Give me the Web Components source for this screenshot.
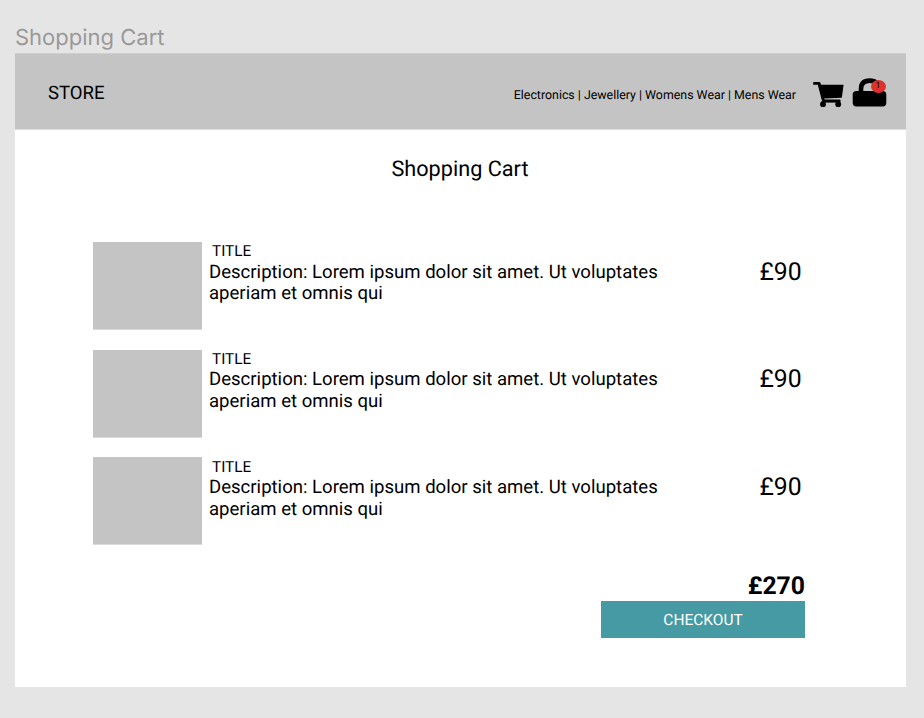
<!DOCTYPE html>
<html lang="en"><head><meta charset="utf-8"><title>Shopping Cart</title>
<style>
html,body{margin:0;height:100%;background:#e5e5e5;overflow:hidden}
body{font-family:Roboto,"Liberation Sans",sans-serif;color:#000;text-rendering:geometricPrecision}
</style></head><body>
<cart-page></cart-page>
<script>
const define=(name,html)=>customElements.define(name,class extends HTMLElement{
  constructor(){super();this.attachShadow({mode:"open"}).innerHTML=html;}
});
define("cart-icon",`<style>:host{display:block;width:32px;height:27px}svg{display:block}</style>
<svg width="32" height="27" viewBox="0.4 0 32 27">
<path d="M1.2 1H6.6Q7.6 1 7.9 2L8.4 3.8H30.5Q31 3.8 30.9 4.4L29.3 16.2Q29.2 16.8 28.6 16.8L11.5 17.4Q11.6 18.4 12.6 18.4H26.8Q28 18.4 28 19.6V20.8H11.8Q9.6 20.8 9 18.6L5.2 3.8H1.2Q.6 3.8.6 3.2V1.6Q.6 1 1.2 1Z"/>
<path d="M9 20H27.5V21.6H9Z"/><circle cx="10.4" cy="23.2" r="2.9"/><circle cx="25.6" cy="23.2" r="2.9"/>
</svg>`);
define("bag-icon",`<style>:host{display:block;position:relative;width:35px;height:31px}svg{display:block}
span{position:absolute;left:18.5px;top:3px;width:15px;height:13px;border-radius:50%;background:#e0302b;color:#000;font-size:8.7px;line-height:13px;text-align:center}</style>
<svg width="35" height="31" viewBox="0 0 35 31"><path d="M9 16V12Q9 3.6 17.7 3.6Q26.4 3.6 26.4 12V16" fill="none" stroke="#000" stroke-width="4.6"/><rect x=".7" y="14" width="33.6" height="15.4" rx="3.6"/></svg><span><slot></slot></span>`);
define("store-header",`<style>:host{display:flex;align-items:center;box-sizing:border-box;height:77px;padding:0 19px 0 33px;background:#c4c4c4;background-clip:padding-box;border-top:1px solid #cecece;border-bottom:1px solid #dedede}
.brand{font-size:18.57px;line-height:22px;margin-top:3px}nav{margin:9px 17px 0 auto;font-size:12.38px;line-height:15px;white-space:pre}cart-icon{margin:6px 7px 0 0}bag-icon{margin-top:2px}</style>
<div class="brand">STORE</div><nav>Electronics | Jewellery | Womens Wear | Mens Wear</nav><cart-icon></cart-icon><bag-icon>1</bag-icon>`);
define("cart-item",`<style>:host{display:flex;height:88px}
.thumb{box-sizing:border-box;width:109px;background:#c4c4c4;border-bottom:1px solid #dadada;background-clip:padding-box;margin-right:7px}
.text{width:470px;font-size:18.57px;line-height:21.76px}
.title{font-size:15.3px;line-height:18px;padding:.2px 0 1.4px 3px}
.price{flex:1;text-align:right;font-size:24.76px;line-height:29px;padding:15.8px 0 0}</style>
<div class="thumb"></div><div class="text"><div class="title"><slot name="title"></slot></div><div><slot></slot></div></div><div class="price"><slot name="price"></slot></div>`);
define("checkout-summary",`<style>:host{display:flex;flex-direction:column;align-items:flex-end}
.total{font-size:24.76px;font-weight:700;line-height:28px}
button{width:204px;height:37px;border:0;padding:0;background:#459aa3;color:#fff;font:15.48px Roboto,sans-serif;text-rendering:geometricPrecision}</style>
<div class="total"><slot></slot></div><button>CHECKOUT</button>`);
const item=`<cart-item><span slot="title">TITLE</span>Description: Lorem ipsum dolor sit amet. Ut voluptates<br>aperiam et omnis qui<span slot="price">£90</span></cart-item>`;
define("cart-page",`<style>:host{display:block;padding:25px 18px 0 15px}
.label{font:22px/27px Inter,sans-serif;color:#999;height:28px}
main{background:#fff;height:634px}
h1{margin:0;padding:27px 1px 0 0;text-align:center;font-weight:400;font-size:21.66px;line-height:26px}
.items{display:flex;flex-direction:column;gap:19.7px;padding:59px 104.4px 0 78px}
checkout-summary{padding:27.8px 101px 0 0}</style>
<div class="label">Shopping Cart</div><main><store-header></store-header><h1>Shopping Cart</h1><div class="items">${item.repeat(3)}</div><checkout-summary>£270</checkout-summary></main>`);
</script></body></html>
